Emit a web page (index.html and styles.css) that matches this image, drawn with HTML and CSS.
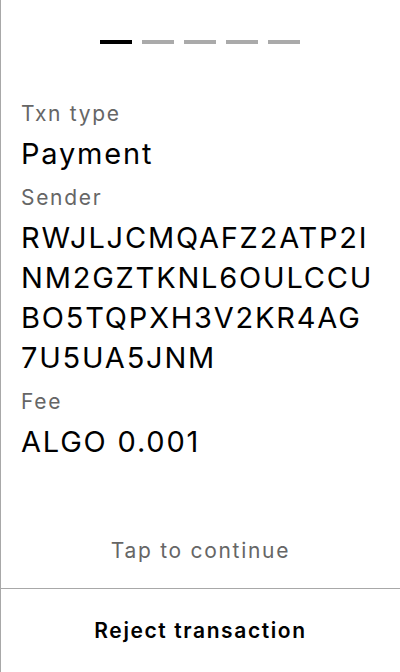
FILE: index.html
```html
<!DOCTYPE html>
<html lang="en">
<head>
<meta charset="utf-8">
<title>Transaction</title>
<link rel="stylesheet" href="styles.css">
</head>
<body>
<div class="screen">
  <div class="steps">
    <span class="step active"></span>
    <span class="step"></span>
    <span class="step"></span>
    <span class="step"></span>
    <span class="step"></span>
  </div>
  <div class="details">
    <div class="field">
      <div class="label">Txn type</div>
      <div class="value">Payment</div>
    </div>
    <div class="field">
      <div class="label">Sender</div>
      <div class="value address">RWJLJCMQAFZ2ATP2INM2GZTKNL6OULCCUBO5TQPXH3V2KR4AG7U5UA5JNM</div>
    </div>
    <div class="field">
      <div class="label">Fee</div>
      <div class="value">ALGO 0.001</div>
    </div>
  </div>
  <div class="hint">Tap to continue</div>
  <div class="reject">Reject transaction</div>
</div>
</body>
</html>
```
FILE: styles.css
```css
html, body {
  margin: 0;
  padding: 0;
  background: #fff;
}
body {
  font-family: Inter, "Noto Sans", sans-serif;
  color: #000;
}
.screen {
  height: 672px;
  box-sizing: border-box;
  border-left: 1px solid #a8a8a8;
  display: flex;
  flex-direction: column;
}
.steps {
  display: flex;
  justify-content: center;
  gap: 10px;
  padding-top: 40px;
  padding-right: 1px;
}
.step {
  width: 32px;
  height: 4px;
  background: #aaaaaa;
}
.step.active {
  background: #000;
}
.details {
  padding: 54px 22px 0 20px;
  flex: 1;
  display: flex;
  flex-direction: column;
  gap: 8px;
}
.field {
  display: flex;
  flex-direction: column;
  gap: 4px;
}
.label {
  font-size: 21px;
  line-height: 32px;
  letter-spacing: 1.7px;
  color: #666;
}
.value {
  font-size: 29px;
  line-height: 40px;
  letter-spacing: 1.8px;
}
.address {
  word-break: break-all;
}
.hint {
  text-align: center;
  font-size: 21px;
  line-height: 32px;
  letter-spacing: 1.7px;
  color: #666;
  padding-bottom: 21px;
}
.reject {
  border-top: 1px solid #a8a8a8;
  height: 83px;
  display: flex;
  align-items: center;
  justify-content: center;
  font-size: 21px;
  font-weight: 600;
  letter-spacing: 1.6px;
}
```
